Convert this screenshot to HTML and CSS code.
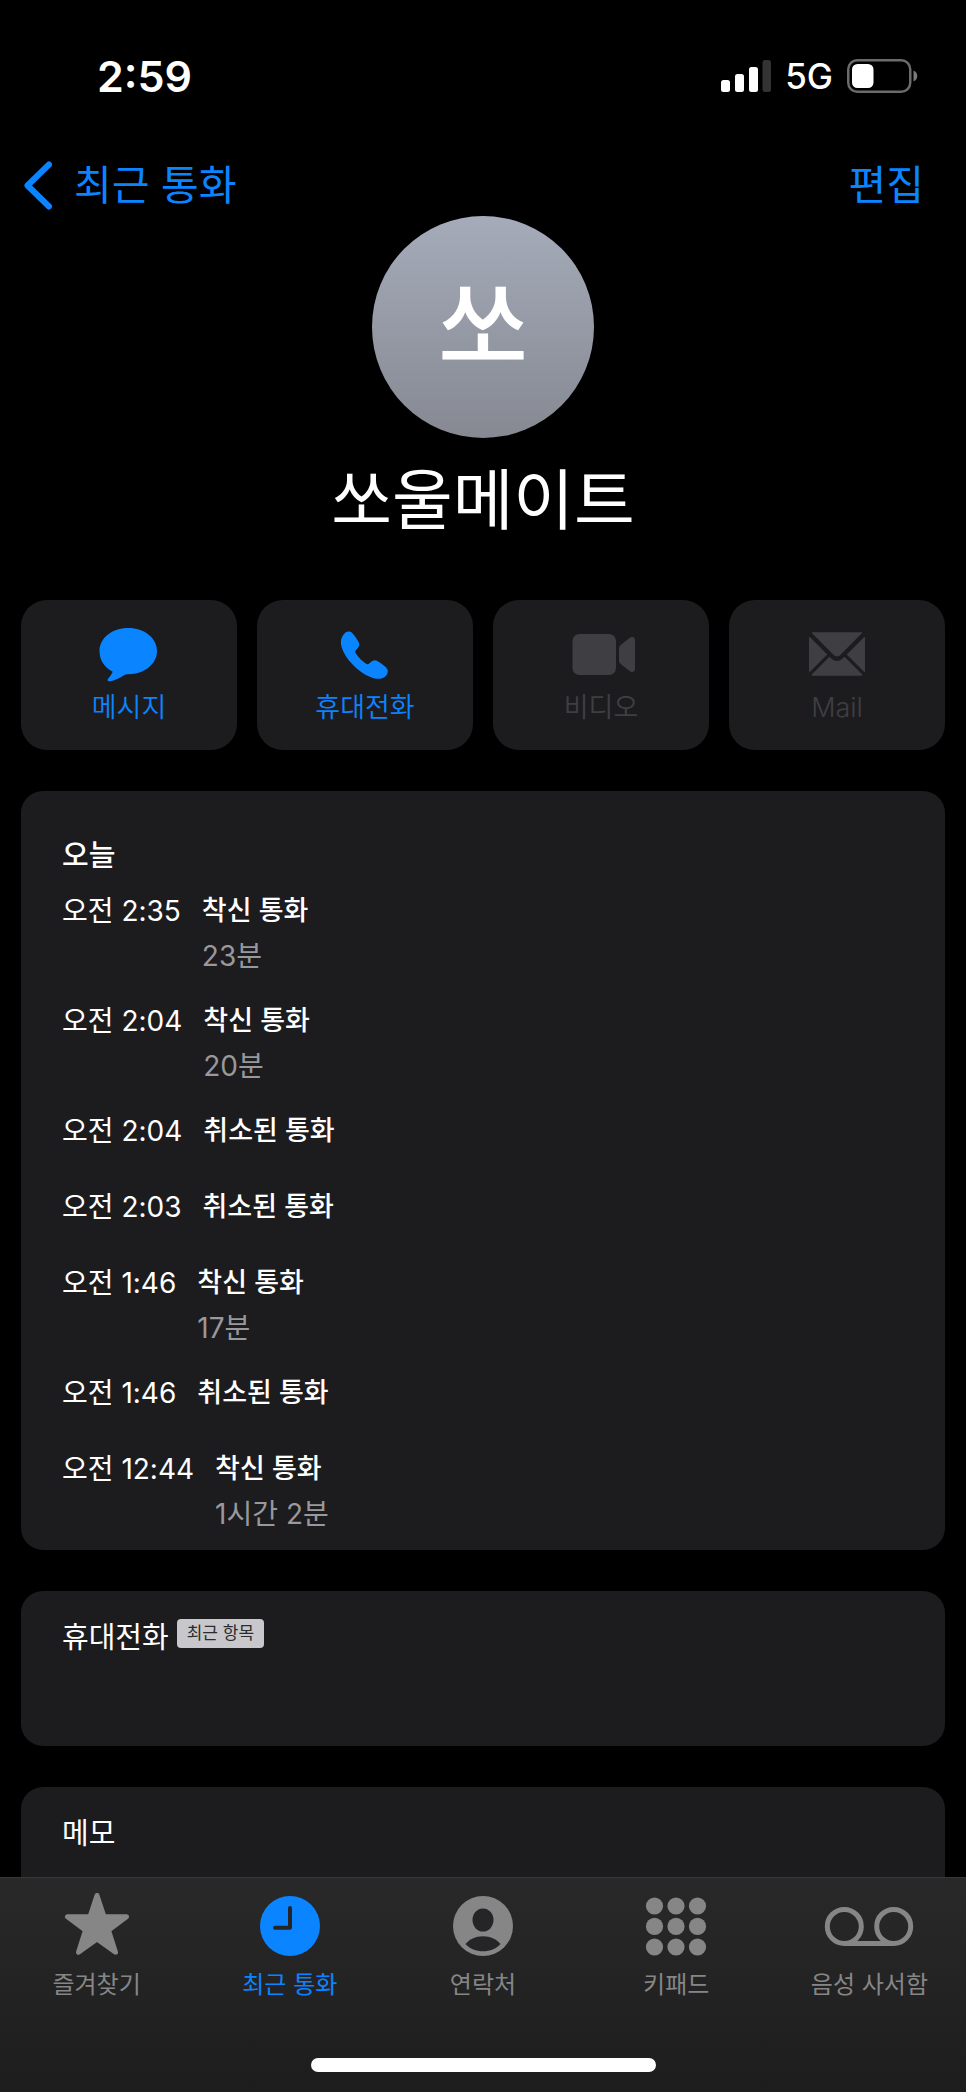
FILE: index.html
```html
<!DOCTYPE html>
<html lang="ko">
<head>
<meta charset="utf-8">
<meta name="viewport" content="width=device-width, initial-scale=1">
<title>쏘울메이트</title>
<link rel="stylesheet" href="styles.css">
</head>
<body>
<div class="app">
  <div class="scroll">
    <div class="status">
      <span class="status-time">2:59</span>
      <div class="status-right">
        <svg class="signal" viewBox="0 0 50 32" aria-hidden="true">
          <rect x="0" y="20" width="9" height="12" rx="2.5"/>
          <rect x="14" y="14" width="9" height="18" rx="2.5"/>
          <rect x="28" y="7" width="9" height="25" rx="2.5"/>
          <rect class="signal-off" x="41.500" y="0" width="8.500" height="32" rx="2.500"/>
        </svg>
        <span class="network">5G</span>
        <svg class="battery" viewBox="0 0 72 34" aria-hidden="true">
          <rect class="battery-shell" x="1.250" y="1.250" width="62" height="31.500" rx="9"/>
          <rect x="5" y="5" width="21.500" height="24" rx="5.500"/>
          <path class="battery-nub" d="M66.500 11.500c5 1.800 5 9.200 0 11z"/>
        </svg>
      </div>
    </div>

    <header class="nav">
      <a class="nav-link" href="#recents">
        <svg class="chevron" viewBox="0 0 30 50" aria-hidden="true"><path d="M27 4.500L5.500 25.500 27 46.500"/></svg>
        <span>최근 통화</span>
      </a>
      <button class="nav-link" type="button">편집</button>
    </header>

    <section class="profile">
      <div class="avatar" aria-hidden="true">쏘</div>
      <h1 class="name">쏘울메이트</h1>
    </section>

    <div class="actions">
      <button class="action" type="button">
        <svg class="action-icon" viewBox="0 0 72 60" aria-hidden="true"><path d="M35.200 3C51.500 3 64 13 64 26S51.500 49.200 35.200 49.200c-1.800 0-3.200.3-4.700 1.300-4 2.700-8.500 5-13.500 5.700-2.500.3-3.200-1.200-1.600-3 1.800-2 3.300-4 4.300-6.500C11.500 42.500 6.500 35 6.500 26 6.500 13 19 3 35.200 3z"/></svg>
        <span>메시지</span>
      </button>
      <button class="action" type="button">
        <svg class="action-icon" viewBox="0 0 72 60" aria-hidden="true"><path d="M15.300 8.800c2.200-2.800 6-3 8.400-.2 2 2.300 4.300 5.600 5.900 8.500 1.200 2.300.9 4.300-.9 6.200l-1.800 1.900c-.8.9-.9 1.700-.3 2.800 2.600 4.300 6.300 8 10.800 10.900 1 .6 1.900.5 2.800-.3l2-1.900c1.900-1.700 3.900-2 6.100-.6 2.900 1.700 5.700 3.700 8.300 5.900 2.800 2.300 2.900 5.700.6 8.500-3.100 3.900-9.500 4.200-15.300 1.800C28.500 46.700 16.300 34 12.700 22.500c-1.500-5-.9-10.200 2.600-13.700z"/></svg>
        <span>휴대전화</span>
      </button>
      <button class="action" type="button" disabled>
        <svg class="action-icon" viewBox="0 0 72 60" aria-hidden="true"><rect x="7.500" y="9" width="43.500" height="41" rx="7"/><path d="M54 23.500c0-1.500.6-2.600 1.700-3.600l8.800-7c2.600-2 5.500-.8 5.500 2.300v28.600c0 3.100-2.900 4.300-5.500 2.300l-8.800-7c-1.100-1-1.700-2.100-1.700-3.600z"/></svg>
        <span>비디오</span>
      </button>
      <button class="action" type="button" disabled>
        <svg class="action-icon" viewBox="0 0 72 60" aria-hidden="true"><path d="M11.500 7.200h49c.7 0 .9.500.4 1L39.500 29.800c-2.200 2.200-4.800 2.200-7 0L11.100 8.200c-.5-.5-.3-1 .4-1z"/><path d="M8 13c0-1 .6-1.200 1.300-.6l17 17.100-17 17.100C8.600 47.200 8 47 8 46z"/><path d="M64 13c0-1-.6-1.200-1.300-.6l-17 17.100 17 17.100c.7.600 1.300.4 1.300-.6z"/><path d="M28.500 31.700l1.600 1.600c3.700 3.500 8.100 3.500 11.800 0l1.600-1.600L61 49.300c.6.700.3 1.500-.6 1.500H11.600c-.9 0-1.200-.8-.6-1.500z"/></svg>
        <span>Mail</span>
      </button>
    </div>

    <main class="cards">
      <section class="card calls">
        <h2 class="calls-title">오늘</h2>
        <ul class="call-list">
          <li class="call"><time>오전 2:35</time><div class="call-info"><strong>착신 통화</strong><span>23분</span></div></li>
          <li class="call"><time>오전 2:04</time><div class="call-info"><strong>착신 통화</strong><span>20분</span></div></li>
          <li class="call"><time>오전 2:04</time><div class="call-info"><strong>취소된 통화</strong></div></li>
          <li class="call"><time>오전 2:03</time><div class="call-info"><strong>취소된 통화</strong></div></li>
          <li class="call"><time>오전 1:46</time><div class="call-info"><strong>착신 통화</strong><span>17분</span></div></li>
          <li class="call"><time>오전 1:46</time><div class="call-info"><strong>취소된 통화</strong></div></li>
          <li class="call"><time>오전 12:44</time><div class="call-info"><strong>착신 통화</strong><span>1시간 2분</span></div></li>
        </ul>
      </section>

      <section class="card field">
        <h2 class="field-label">휴대전화</h2>
        <span class="badge">최근 항목</span>
      </section>

      <section class="card field">
        <h2 class="field-label">메모</h2>
      </section>
    </main>
  </div>

  <footer class="dock">
    <nav class="tabs">
      <a class="tab" href="#favorites">
        <svg class="tab-icon star" viewBox="0 0 96 70" aria-hidden="true"><path d="M48 5.500l7 21.300h22.500L59.500 40.200l7 22L48 49l-18.500 13.200 7-22-18-13.400H41z"/></svg>
        <span>즐겨찾기</span>
      </a>
      <a class="tab tab-active" href="#recents" aria-current="page">
        <svg class="tab-icon" viewBox="0 0 96 70" aria-hidden="true"><circle cx="48" cy="36" r="30"/><path class="hands" d="M48 18v19.800H33"/></svg>
        <span>최근 통화</span>
      </a>
      <a class="tab" href="#contacts">
        <svg class="tab-icon" viewBox="0 0 96 70" aria-hidden="true"><circle cx="48" cy="36" r="30"/><ellipse class="cut" cx="48" cy="30" rx="10.500" ry="11.500"/><path class="cut" d="M30.500 54c3.500-4.500 10-7.800 17.500-7.800S62 49.500 65.500 54c-4.500 4.800-10.500 7.300-17.500 7.300S35 58.800 30.500 54z"/></svg>
        <span>연락처</span>
      </a>
      <a class="tab" href="#keypad">
        <svg class="tab-icon" viewBox="0 0 96 70" aria-hidden="true"><circle cx="26.500" cy="16" r="8.600"/><circle cx="48" cy="16" r="8.600"/><circle cx="69.500" cy="16" r="8.600"/><circle cx="26.500" cy="36.400" r="8.600"/><circle cx="48" cy="36.400" r="8.600"/><circle cx="69.500" cy="36.400" r="8.600"/><circle cx="26.500" cy="57" r="8.600"/><circle cx="48" cy="57" r="8.600"/><circle cx="69.500" cy="57" r="8.600"/></svg>
        <span>키패드</span>
      </a>
      <a class="tab" href="#voicemail">
        <svg class="tab-icon voicemail" viewBox="0 0 96 70" aria-hidden="true"><circle cx="23.300" cy="36.400" r="17"/><circle cx="72.700" cy="36.400" r="17"/><path d="M23.300 53.400h49.400"/></svg>
        <span>음성 사서함</span>
      </a>
    </nav>
    <div class="home-bar"></div>
  </footer>
</div>
</body>
</html>
```
FILE: styles.css
```css
:root {
  --blue: #0b84ff;
  --card: #1c1c1e;
  --muted: #98989d;
  --tab: #868686;
}

* { box-sizing: border-box; }

body {
  margin: 0;
  background: #000;
  color: #fff;
  font-family: Inter, "Noto Sans CJK KR", sans-serif;
}

button, a {
  border: 0;
  padding: 0;
  background: none;
  color: inherit;
  font: inherit;
  text-decoration: none;
}

h1, h2, ul { margin: 0; padding: 0; }

.app {
  display: flex;
  flex-direction: column;
  height: 100vh;
}

.scroll {
  flex: 1;
  min-height: 0;
  overflow-y: auto;
  scrollbar-width: none;
}

.status {
  display: flex;
  justify-content: space-between;
  align-items: center;
  padding: 49px 47px 0 97px;
  line-height: 54px;
}

.status-time { font-size: 43px; font-weight: 600; }

.status-right { display: flex; align-items: center; }

.signal { width: 50px; height: 32px; fill: #fff; }
.signal-off { fill: #333; }
.network { margin: 0 14px; font-size: 35px; font-weight: 500; }
.battery { width: 72px; height: 34px; fill: #fff; }
.battery-shell { fill: none; stroke: #6b6b6b; stroke-width: 2.5; }
.battery-nub { fill: #7a7a7a; }

.nav {
  display: flex;
  justify-content: space-between;
  margin-top: 55px;
  padding: 0 42px 0 22px;
  color: var(--blue);
  font-size: 41px;
  line-height: 54px;
}

.nav-link { display: flex; align-items: center; gap: 22px; }

.chevron {
  width: 30px;
  height: 50px;
  fill: none;
  stroke: currentColor;
  stroke-width: 6;
  stroke-linecap: round;
  stroke-linejoin: round;
}

.profile {
  display: flex;
  flex-direction: column;
  align-items: center;
  gap: 22px;
  margin-top: 4px;
}

.avatar {
  width: 222px;
  height: 222px;
  border-radius: 50%;
  background: linear-gradient(#a5abb9, #868992);
  font-size: 98px;
  font-weight: 500;
  line-height: 222px;
  text-align: center;
}

.name { font-size: 66px; font-weight: 400; line-height: 80px; }

.actions {
  display: grid;
  grid-template-columns: repeat(4, 1fr);
  gap: 20px;
  margin-top: 60px;
  padding: 0 21px;
}

.action {
  display: flex;
  flex-direction: column;
  align-items: center;
  gap: 5px;
  padding: 25px 0 24px;
  border-radius: 26px;
  background: var(--card);
  color: var(--blue);
  font-size: 27px;
  font-weight: 350;
  line-height: 36px;
}

.action:disabled { color: #3f3f43; }

.action-icon { width: 72px; height: 60px; fill: currentColor; }

.cards {
  display: grid;
  gap: 41px;
  margin-top: 41px;
  padding: 0 21px;
}

.card { padding: 0 41px; border-radius: 22px; background: var(--card); }

.calls { padding-top: 48px; padding-bottom: 19px; }

.calls-title { font-size: 29px; font-weight: 500; line-height: 34px; }

.call-list {
  display: grid;
  gap: 31px;
  margin-top: 21px;
  list-style: none;
}

.call {
  display: flex;
  gap: 21px;
  min-height: 45px;
  font-size: 28px;
  line-height: 34px;
}

.call-info { display: grid; align-content: start; gap: 11px; }
.call-info strong { font-size: 27px; font-weight: 500; }
.call-info span { color: var(--muted); }

.field {
  display: flex;
  align-items: flex-start;
  gap: 8px;
  min-height: 155px;
  padding-top: 28px;
}

.field-label { font-size: 29px; font-weight: 400; line-height: 38px; }

.badge {
  padding: 0 10px;
  border-radius: 4px;
  background: #c7c7cc;
  color: #2c2c2e;
  font-size: 17px;
  line-height: 29px;
}

.dock {
  display: flex;
  flex-direction: column;
  align-items: center;
  gap: 55px;
  padding: 12px 0 20px;
  border-top: 1px solid #38383a;
  background: linear-gradient(#29292a, #1d1d1d);
}

.tabs {
  display: grid;
  grid-template-columns: repeat(5, 1fr);
  width: 100%;
}

.tab {
  display: flex;
  flex-direction: column;
  align-items: center;
  gap: 7px;
  color: var(--tab);
  font-size: 24px;
  line-height: 36px;
}

.tab-active { color: var(--blue); }

.tab-icon { width: 96px; height: 70px; fill: currentColor; }
.star { stroke: currentColor; stroke-width: 5; stroke-linejoin: round; }
.hands {
  fill: none;
  stroke: #252527;
  stroke-width: 4;
  stroke-linecap: round;
  stroke-linejoin: round;
}
.cut { fill: #252527; }
.voicemail { fill: none; stroke: currentColor; stroke-width: 5; }

.home-bar { width: 345px; height: 14px; border-radius: 7px; background: #fff; }
```
